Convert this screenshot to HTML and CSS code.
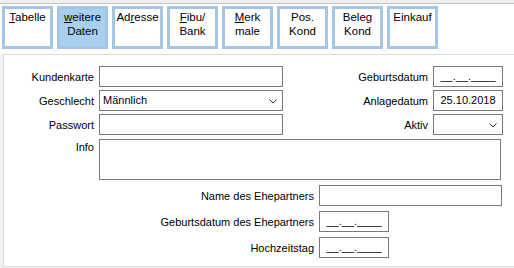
FILE: index.html
```html
<!DOCTYPE html>
<html lang="de">
<head>
    <meta charset="UTF-8">
    <title>Kunde - weitere Daten</title>
    <link rel="stylesheet" href="styles.css">
</head>
<body>
    <!-- Reiter -->
    <div class="tabbar">
        <div class="tab"><u>T</u>abelle</div>
        <div class="tab active"><u>w</u>eitere<br>Daten</div>
        <div class="tab">Ad<u>r</u>esse</div>
        <div class="tab"><u>F</u>ibu/<br>Bank</div>
        <div class="tab"><u>M</u>erk<br>male</div>
        <div class="tab">Pos.<br>Kond</div>
        <div class="tab">Beleg<br>Kond</div>
        <div class="tab">Einkauf</div>
    </div>

    <div class="panel">
        <!-- obere Felder -->
        <div class="grid-top">
            <label>Kundenkarte</label>
            <div class="field"></div>
            <label>Geburtsdatum</label>
            <div class="field date">__.__.____</div>

            <label>Geschlecht</label>
            <div class="field combo">Männlich
                <svg class="arrow" width="8" height="5" viewBox="0 0 8 5"><path d="M0.5 0.5 L4 4 L7.5 0.5" fill="none" stroke="#333" stroke-width="1"/></svg>
            </div>
            <label>Anlagedatum</label>
            <div class="field date">25.10.2018</div>

            <label>Passwort</label>
            <div class="field"></div>
            <label>Aktiv</label>
            <div class="field combo">
                <svg class="arrow" width="8" height="5" viewBox="0 0 8 5"><path d="M0.5 0.5 L4 4 L7.5 0.5" fill="none" stroke="#333" stroke-width="1"/></svg>
            </div>

            <label class="top">Info</label>
            <div class="field memo"></div>
        </div>

        <!-- Ehepartner -->
        <div class="grid-bottom">
            <label>Name des Ehepartners</label>
            <div class="field wide"></div>

            <label>Geburtsdatum des Ehepartners</label>
            <div class="field date">__.__.____</div>

            <label>Hochzeitstag</label>
            <div class="field date">__.__.____</div>
        </div>
    </div>
</body>
</html>
```

FILE: styles.css
```css
body {
    margin: 0;
    background: #f0f0f0;
    font-family: 'Liberation Sans', Arial, sans-serif;
    font-size: 11px;
    color: #000;
    overflow: hidden;
}
.tabbar {
    margin-top: 3px;
    border-top: 1px solid #c6c6c6;
    background: #fff;
    display: flex;
    gap: 4px;
    padding: 2px 0 5px 2px;
}
.tab {
    width: 45px;
    height: 36px;
    border: 3px solid #a4c6e3;
    background: #fff;
    text-align: center;
    line-height: 14px;
    font-size: 11.5px;
    padding-top: 1px;
}
.tab.active {
    background: #a8cfee;
}
.panel {
    background: #fff;
    margin-left: 3px;
    border: 1px solid #dcdcdc;
    border-right: none;
    height: 200px;
    padding-top: 11px;
}
label {
    text-align: right;
    align-self: center;
    white-space: nowrap;
}
label.top {
    align-self: start;
    padding-top: 3px;
}
.grid-top {
    display: grid;
    grid-template-columns: 90px 184px 140px 70px;
    grid-template-rows: 21px 21px 21px 41px;
    column-gap: 5px;
    row-gap: 3px;
}
.field {
    border: 1px solid #7a7a7a;
    background: #fff;
    padding: 0 3px;
    line-height: 19px;
    position: relative;
}
.field.date {
    text-align: center;
}
.combo .arrow {
    position: absolute;
    right: 5px;
    top: 8px;
}
.memo {
    grid-column: 2 / 5;
    height: 39px;
    margin-top: 1px;
    margin-right: 2px;
}
.grid-bottom {
    display: grid;
    grid-template-columns: 310px 183px;
    grid-auto-rows: 21px;
    column-gap: 5px;
    row-gap: 5px;
    margin-top: 6px;
}
.grid-bottom .date {
    width: 62px;
}
```
